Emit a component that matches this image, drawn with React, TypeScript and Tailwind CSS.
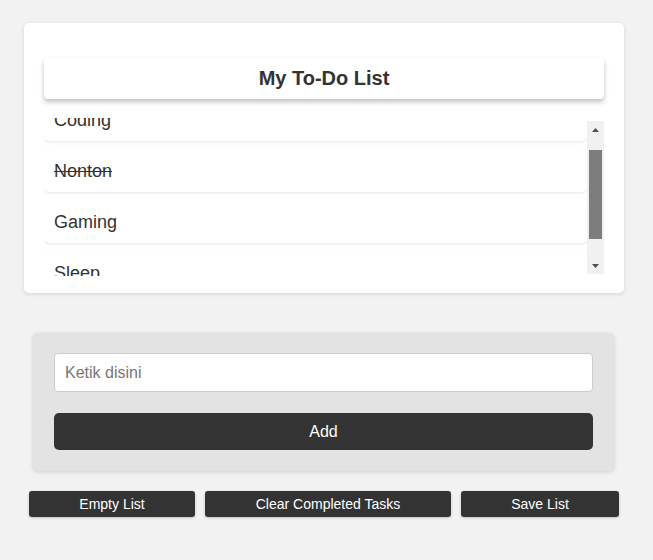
import React from "react";

const tasks = [
  { text: "Coding", done: false },
  { text: "Nonton", done: true },
  { text: "Gaming", done: false },
  { text: "Sleep", done: false },
];

function Scrollbar() {
  return (
    <div className="mt-[3px] flex h-[153px] w-[17px] shrink-0 flex-col items-center bg-[#f1f1f1]">
      <div className="flex h-[17px] w-full items-center justify-center">
        <svg width="7" height="4" viewBox="0 0 7 4">
          <path d="M3.5 0 L7 4 L0 4 Z" fill="#505050" />
        </svg>
      </div>
      <div className="h-[12px]" />
      <div className="h-[89px] w-[13px] bg-[#7d7d7d]" />
      <div className="flex-1" />
      <div className="flex h-[17px] w-full items-center justify-center">
        <svg width="7" height="4" viewBox="0 0 7 4">
          <path d="M0 0 L7 0 L3.5 4 Z" fill="#505050" />
        </svg>
      </div>
    </div>
  );
}

export default function App() {
  return (
    <div className="min-h-[560px] w-full bg-[#f2f2f2] pt-[23px] font-['Liberation_Sans',Arial,sans-serif] text-[#333]">
      {/* List card */}
      <div className="ml-[24px] w-[600px] rounded-[5px] bg-white px-[20px] pt-[35px] pb-[17px] shadow-[0_1px_4px_rgba(0,0,0,0.12)]">
        <div className="relative z-10 flex h-[41px] items-center justify-center rounded-[4px] bg-white pb-[2px] shadow-[0_3px_5px_rgba(0,0,0,0.25)]">
          <h1 className="text-[20px] font-bold text-[#333]">My To-Do List</h1>
        </div>
        <div className="mt-[19px] flex h-[158px]">
          <div className="h-full flex-1 overflow-hidden">
            <ul className="-mt-[22px] flex flex-col gap-[6px] pb-2">
              {tasks.map((t) => (
                <li
                  key={t.text}
                  className="flex h-[45px] shrink-0 items-center rounded-[5px] bg-white pt-[3px] pl-[10px] text-[18px] text-[#333] shadow-[0_1px_3px_rgba(0,0,0,0.1)]"
                >
                  <span className={t.done ? "line-through" : ""}>{t.text}</span>
                </li>
              ))}
            </ul>
          </div>
          <Scrollbar />
        </div>
      </div>

      {/* Input panel */}
      <div className="mt-[40px] ml-[33px] w-[581px] rounded-[5px] bg-[#e3e3e3] px-[21px] pt-[20px] pb-[21px] shadow-[0_1px_4px_rgba(0,0,0,0.15)]">
        <input
          type="text"
          placeholder="Ketik disini"
          className="h-[39px] w-full rounded-[4px] border border-[#cccccc] bg-white px-[10px] text-[16px] text-[#333] outline-none placeholder:text-[#777]"
        />
        <button className="mt-[21px] h-[37px] w-full rounded-[5px] bg-[#333] text-[16px] text-white">
          Add
        </button>
      </div>

      {/* Action buttons */}
      <div className="mt-[20px] ml-[29px] flex gap-[10px]">
        <button className="h-[26px] w-[166px] rounded-[3px] bg-[#333] text-[14px] text-white shadow-[0_1px_3px_rgba(0,0,0,0.2)]">
          Empty List
        </button>
        <button className="h-[26px] w-[246px] rounded-[3px] bg-[#333] text-[14px] text-white shadow-[0_1px_3px_rgba(0,0,0,0.2)]">
          Clear Completed Tasks
        </button>
        <button className="h-[26px] w-[158px] rounded-[3px] bg-[#333] text-[14px] text-white shadow-[0_1px_3px_rgba(0,0,0,0.2)]">
          Save List
        </button>
      </div>
    </div>
  );
}
